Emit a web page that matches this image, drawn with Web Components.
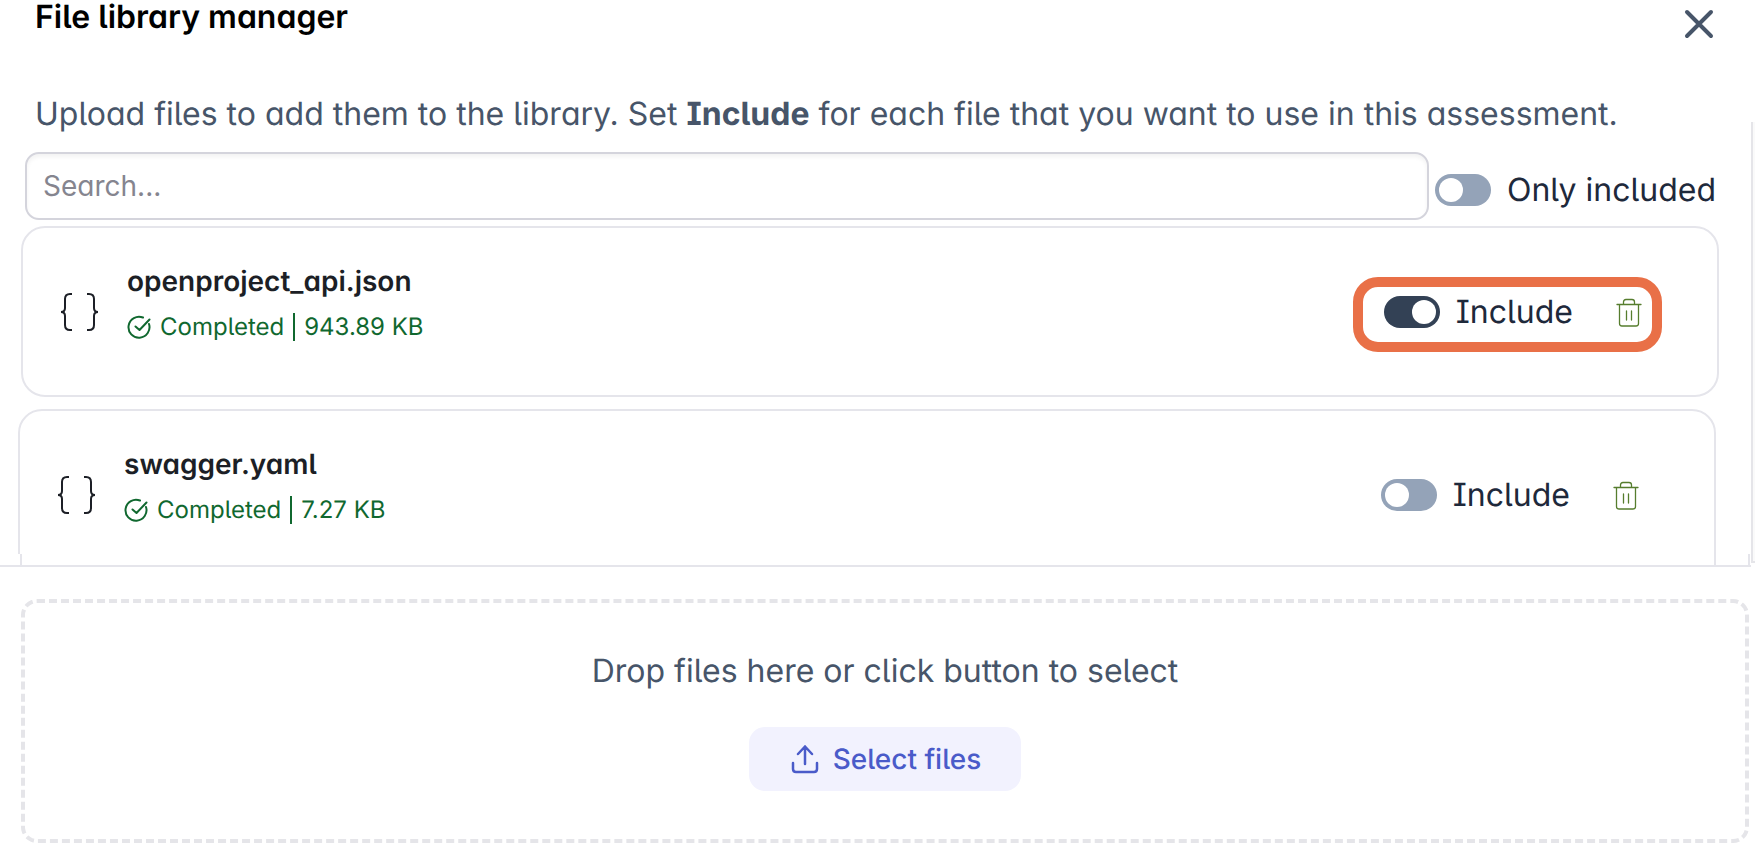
<!DOCTYPE html>
<html lang="en">
<head>
<meta charset="utf-8">
<title>File library manager</title>
<style>
  html, body {
    height: 100%;
    margin: 0;
  }

  body {
    background: #fff;
    color: #1e293b;
    font-family: Inter, "Liberation Sans", sans-serif;
    font-size: 32px;
    line-height: 40px;
    font-feature-settings: "cv05", "cv08", "cv11";
    text-rendering: geometricPrecision;
    overflow: hidden;
  }
</style>
</head>
<body>
<file-library>
  <span slot="title">File library manager</span>
  <span slot="intro">Upload files to add them to the library. Set <b>Include</b> for each file that you want to use in this assessment.</span>
  <search-box slot="search"></search-box>
  <toggle-switch slot="search">Only included</toggle-switch>
  <file-card name="openproject_api.json" size="943.89 KB" included highlighted></file-card>
  <file-card class="shifted" name="swagger.yaml" size="7.27 KB"></file-card>
  <drop-zone slot="footer">Drop files here or click button to select</drop-zone>
</file-library>

<script>
// on/off switch with its label
class ToggleSwitch extends HTMLElement {
  static observedAttributes = ["checked"];

  constructor() {
    super();
    this.attachShadow({ mode: "open" });
    this.shadowRoot.innerHTML = `
      <style>
        :host {
          display: block;
          flex: none;
        }

        label {
          display: flex;
          align-items: center;
          gap: 16px;
          white-space: nowrap;
          cursor: pointer;
        }

        input {
          appearance: none;
          display: flex;
          align-items: center;
          box-sizing: border-box;
          width: 56px;
          height: 32px;
          margin: 0;
          padding: 0 4px;
          border-radius: 16px;
          background: #94a3b8;
          cursor: pointer;
        }

        input::before {
          content: "";
          width: 24px;
          height: 24px;
          border-radius: 50%;
          background: #fff;
        }

        input:checked {
          justify-content: flex-end;
          background: #334155;
        }
      </style>
      <label><input type="checkbox" role="switch"><span><slot></slot></span></label>
    `;
  }

  attributeChangedCallback() {
    this.shadowRoot.querySelector("input").checked = this.hasAttribute("checked");
  }
}

customElements.define("toggle-switch", ToggleSwitch);

// search field
class SearchBox extends HTMLElement {
  constructor() {
    super();
    this.attachShadow({ mode: "open" });
    this.shadowRoot.innerHTML = `
      <style>
        :host {
          display: block;
          flex: 1;
        }

        input {
          display: block;
          box-sizing: border-box;
          width: 100%;
          height: 68px;
          padding: 0 16px;
          border: 2px solid #d4d4dc;
          border-radius: 14px;
          background: #fff;
          box-shadow: inset 0 3px 4px rgba(0, 0, 0, 0.05);
          color: inherit;
          font: inherit;
          font-size: 28px;
          font-feature-settings: inherit;
          outline: none;
        }

        input::placeholder {
          color: #85858f;
        }
      </style>
      <input type="text" placeholder="Search..." aria-label="Search">
    `;
  }
}

customElements.define("search-box", SearchBox);

// one uploaded file
class FileCard extends HTMLElement {
  constructor() {
    super();
    this.attachShadow({ mode: "open" });
    this.shadowRoot.innerHTML = `
      <style>
        :host {
          display: flex;
          align-items: center;
          gap: 28px;
          box-sizing: border-box;
          height: 171px;
          padding: 0 74px 0 36px;
          border: 2px solid #e5e5eb;
          border-radius: 24px;
          background: #fff;
        }

        .braces {
          flex: none;
          width: 40px;
          height: 40px;
        }

        .info {
          flex: 1;
          min-width: 0;
          padding-bottom: 20px;
        }

        .name {
          margin: 0;
          color: #1c1f26;
          font-size: 28px;
          font-weight: 600;
        }

        .status {
          display: flex;
          align-items: center;
          gap: 9px;
          margin-top: 10px;
          color: #10682f;
          font-size: 24px;
          line-height: 32px;
        }

        .status svg {
          width: 24px;
          height: 24px;
        }

        .divider {
          width: 2px;
          height: 28px;
          background: currentColor;
        }

        .actions {
          position: relative;
          display: flex;
          align-items: center;
          gap: 42px;
        }

        /* callout ring drawn over the actions */
        :host([highlighted]) .actions::after {
          content: "";
          position: absolute;
          inset: -15px -19px -20px -31px;
          border: 10px solid #e97047;
          border-radius: 25px;
          pointer-events: none;
        }

        button {
          display: block;
          padding: 0;
          border: none;
          background: none;
          cursor: pointer;
        }

        button svg {
          display: block;
          width: 28px;
          height: 30px;
        }
      </style>

      <svg class="braces" viewBox="0 0 40 40" fill="none" stroke="#1c1f26" stroke-width="2" aria-hidden="true">
        <path d="M13 2h-2q-5 0-5 5v9q0 4-4 4q4 0 4 4v9q0 5 5 5h2M28 2h2q5 0 5 5v9q0 4 4 4q-4 0-4 4v9q0 5-5 5h-2"/>
      </svg>
      <div class="info">
        <h2 class="name"></h2>
        <div class="status">
          <svg viewBox="0 0 24 24" fill="none" stroke="currentColor" stroke-width="2" stroke-linecap="round" stroke-linejoin="round" aria-hidden="true">
            <path d="M16 2.500A10.500 10.500 0 1 0 22 9M8.500 11.500l4 3.500L22.500 4.500"/>
          </svg>
          <span>Completed</span>
          <span class="divider"></span>
          <span class="size"></span>
        </div>
      </div>
      <div class="actions">
        <toggle-switch>Include</toggle-switch>
        <button type="button" aria-label="Delete file">
          <svg viewBox="0 0 28 30" fill="none" stroke="#567d2e" stroke-width="1.300" stroke-linecap="round">
            <path d="M2 7.500h24M8.500 7V5q0-2.500 2.500-2.500h6q2.500 0 2.500 2.500v2M4.500 8v18.500q0 2.500 2.500 2.500h14q2.500 0 2.500-2.500V8M11.500 14v9M16.500 14v9"/>
          </svg>
        </button>
      </div>
    `;
  }

  connectedCallback() {
    const root = this.shadowRoot;
    root.querySelector(".name").textContent = this.getAttribute("name");
    root.querySelector(".size").textContent = this.getAttribute("size");
    root.querySelector("toggle-switch").toggleAttribute("checked", this.hasAttribute("included"));
  }
}

customElements.define("file-card", FileCard);

// upload area
class DropZone extends HTMLElement {
  constructor() {
    super();
    this.attachShadow({ mode: "open" });
    this.shadowRoot.innerHTML = `
      <style>
        :host {
          display: flex;
          flex-direction: column;
          align-items: center;
          gap: 36px;
          padding: 48px 0;
          border: 4px dashed #e5e5e9;
          border-radius: 16px;
          color: #475569;
        }

        p {
          margin: 0;
        }

        button {
          display: flex;
          align-items: center;
          gap: 12px;
          height: 64px;
          padding: 0 40px;
          border: none;
          border-radius: 16px;
          background: #f2f2fe;
          color: #4a5bc9;
          font: inherit;
          font-size: 28px;
          font-weight: 500;
          font-feature-settings: inherit;
          text-rendering: inherit;
          cursor: pointer;
        }

        svg {
          width: 32px;
          height: 32px;
        }
      </style>
      <p><slot></slot></p>
      <button type="button">
        <svg viewBox="0 0 32 32" fill="none" stroke="currentColor" stroke-width="2.500" stroke-linecap="round" stroke-linejoin="round" aria-hidden="true">
          <path d="M16 21V3.500M9 11l7-7.500 7 7.500M4 20v6q0 3 3 3h18q3 0 3-3v-6"/>
        </svg>
        Select files
      </button>
    `;
  }
}

customElements.define("drop-zone", DropZone);

// dialog shell: header, file list, footer
class FileLibrary extends HTMLElement {
  constructor() {
    super();
    this.attachShadow({ mode: "open" });
    this.shadowRoot.innerHTML = `
      <style>
        :host {
          display: flex;
          flex-direction: column;
          height: 100vh;
        }

        header {
          display: flex;
          align-items: flex-start;
          justify-content: space-between;
          height: 94px;
          padding: 0 40px 0 35px;
        }

        h1 {
          margin: 0;
          color: #000;
          font-size: 32px;
          font-weight: 600;
          line-height: 34px;
        }

        header button {
          padding: 8px 0;
          border: none;
          background: none;
          cursor: pointer;
        }

        header svg {
          display: block;
          width: 32px;
          height: 32px;
        }

        .body {
          display: flex;
          flex: 1;
          min-height: 0;
        }

        .content {
          flex: 1;
          min-width: 0;
          overflow: hidden;
        }

        .intro {
          margin: 0 35px 18px;
          color: #475569;
        }

        .search {
          display: flex;
          align-items: center;
          gap: 6px;
          margin: 0 35px 6px 25px;
        }

        ::slotted(toggle-switch) {
          margin-top: 8px;
        }

        .files {
          display: flex;
          flex-direction: column;
          gap: 12px;
          padding: 0 32px 0 21px;
        }

        ::slotted(.shifted) {
          margin: 0 3px 0 -3px;
        }

        .track {
          width: 2px;
          margin: 28px 0 -9px;
          border: solid #e5e5e9;
          border-width: 0 0 2px 2px;
          background: #fafafa;
        }

        .edge {
          display: flex;
          height: 11px;
          margin: 0 5px 0 20px;
          border: solid #e5e5eb;
          border-width: 0 2px;
        }

        .edge span {
          flex: 1;
          margin-right: 32px;
          border-right: 2px solid #e5e5eb;
        }

        footer {
          margin-right: 4px;
          padding: 32px 2px 13px 21px;
          border-top: 2px solid #e5e5eb;
        }
      </style>

      <header>
        <h1><slot name="title"></slot></h1>
        <button type="button" aria-label="Close">
          <svg viewBox="0 0 32 32" fill="none" stroke="#475569" stroke-width="4" stroke-linecap="round">
            <path d="M4 4l24 24M28 4l-24 24"/>
          </svg>
        </button>
      </header>
      <div class="body">
        <div class="content">
          <p class="intro"><slot name="intro"></slot></p>
          <div class="search"><slot name="search"></slot></div>
          <div class="files"><slot></slot></div>
        </div>
        <div class="track"></div>
      </div>
      <div class="edge"><span></span></div>
      <footer><slot name="footer"></slot></footer>
    `;
  }
}

customElements.define("file-library", FileLibrary);
</script>
</body>
</html>
